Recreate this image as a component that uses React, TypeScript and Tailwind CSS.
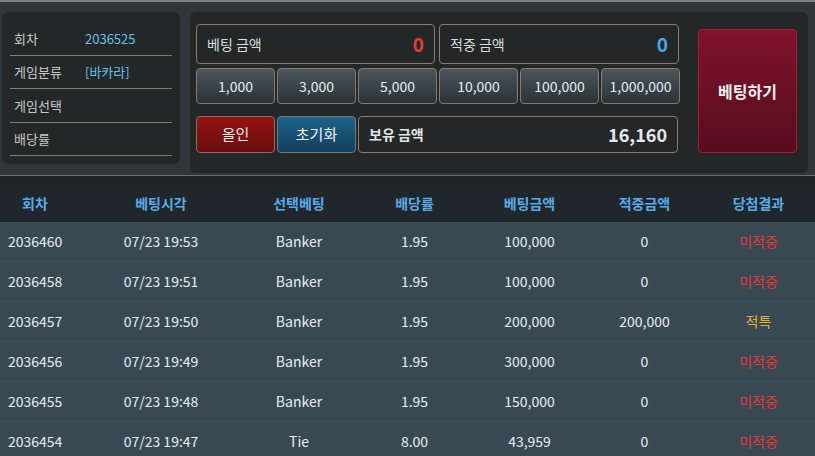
import React from "react";

const font = { fontFamily: '"Noto Sans CJK KR", "Noto Sans", sans-serif' };

const rows = [
  ["2036460", "07/23 19:53", "Banker", "1.95", "100,000", "0", "미적중"],
  ["2036458", "07/23 19:51", "Banker", "1.95", "100,000", "0", "미적중"],
  ["2036457", "07/23 19:50", "Banker", "1.95", "200,000", "200,000", "적특"],
  ["2036456", "07/23 19:49", "Banker", "1.95", "300,000", "0", "미적중"],
  ["2036455", "07/23 19:48", "Banker", "1.95", "150,000", "0", "미적중"],
  ["2036454", "07/23 19:47", "Tie", "8.00", "43,959", "0", "미적중"],
];

const chips = ["1,000", "3,000", "5,000", "10,000", "100,000", "1,000,000"];

const info = [
  ["회차", "2036525"],
  ["게임분류", "[바카라]"],
  ["게임선택", ""],
  ["배당률", ""],
];

const cols = "grid grid-cols-[81px_160px_116px_115px_115px_115px_113px]";

export default function App() {
  return (
    <div style={font} className="w-[815px] h-[456px] overflow-hidden bg-[#1e2224]">
      <div className="h-[176px] bg-[#2f3639] border-t-2 border-t-[#7b7f80] border-b border-b-[#6e6e6c] flex items-start">
        <div className="ml-[2px] mt-[10px] w-[178px] h-[152px] bg-[#232727] rounded-md px-[8px] pt-[10px]">
          {info.map(([k, v]) => (
            <div key={k} className="h-[33.5px] border-b border-[#877d70] flex items-center text-[13px]">
              <span className="w-[75px] pl-[4px] text-[#c9c9c9]">{k}</span>
              <span className="text-[#6cc0e8]">{v}</span>
            </div>
          ))}
        </div>
        <div className="ml-[10px] mt-[10px] w-[618px] h-[161px] bg-[#232727] rounded-md flex items-start pl-[6px] pt-[12px]">
          <div className="w-[484px] flex flex-col">
            <div className="flex gap-[4px] h-[40px]">
              <div className="w-[239px] border border-[#8a7d6e] rounded-[4px] flex items-center justify-between px-[10px]">
                <span className="text-[14px] text-[#dcdcdc]">베팅 금액</span>
                <span className="text-[19px] font-bold text-[#e0403f]">0</span>
              </div>
              <div className="w-[240px] border border-[#8a7d6e] rounded-[4px] flex items-center justify-between px-[10px]">
                <span className="text-[14px] text-[#dcdcdc]">적중 금액</span>
                <span className="text-[19px] font-bold text-[#4ea5e6]">0</span>
              </div>
            </div>
            <div className="flex gap-[2px] h-[36px] mt-[4px]">
              {chips.map((c) => (
                <div key={c} className="w-[79px] border border-[#8a7d6e] rounded-[4px] bg-gradient-to-b from-[#4a555c] to-[#2b3337] flex items-center justify-center text-[14px] text-[#e4ecf3]">
                  {c}
                </div>
              ))}
            </div>
            <div className="flex gap-[2px] h-[37px] mt-[12px]">
              <div className="w-[79px] border border-[#8a6e64] rounded-[4px] bg-gradient-to-b from-[#921414] to-[#6a0e0e] flex items-center justify-center text-[15px] text-[#f0e8e8]">
                올인
              </div>
              <div className="w-[79px] border border-[#6e7a80] rounded-[4px] bg-gradient-to-b from-[#1f6289] to-[#133f5c] flex items-center justify-center text-[15px] text-[#eef3f6]">
                초기화
              </div>
              <div className="w-[320px] border border-[#8a7d6e] rounded-[4px] flex items-center justify-between pl-[10px] pr-[10px]">
                <span className="text-[14px] font-bold text-[#e4e4e4]">보유 금액</span>
                <span className="text-[18px] font-bold text-[#e8e8e8]">16,160</span>
              </div>
            </div>
          </div>
          <div className="ml-[18px] mt-[5px] w-[99px] h-[124px] border border-[#a41c30] rounded-[4px] bg-gradient-to-b from-[#7f132b] to-[#570d1e] flex items-center justify-center text-[16px] font-bold text-[#f2eef0]">
            베팅하기
          </div>
        </div>
      </div>
      <div className="mt-[9px]">
        <div className={`${cols} h-[37px] bg-[#1f262c] items-center text-[14px] font-bold text-[#5caae6]`}>
          <div className="pl-[22px]">회차</div>
          <div className="text-center">베팅시각</div>
          <div className="text-center">선택베팅</div>
          <div className="text-center">배당률</div>
          <div className="text-center">베팅금액</div>
          <div className="text-center">적중금액</div>
          <div className="text-center">당첨결과</div>
        </div>
        {rows.map((r) => (
          <div key={r[0]} className={`${cols} h-[40px] bg-[#394952] border-b border-[#2c5676] items-center text-[14px] text-[#e6edf2]`}>
            <div className="pl-[8px]">{r[0]}</div>
            <div className="text-center">{r[1]}</div>
            <div className="text-center">{r[2]}</div>
            <div className="text-center">{r[3]}</div>
            <div className="text-center">{r[4]}</div>
            <div className="text-center">{r[5]}</div>
            <div className={`text-center ${r[6] === "적특" ? "text-[#e9ad3e]" : "text-[#e2393c]"}`}>{r[6]}</div>
          </div>
        ))}
      </div>
    </div>
  );
}
